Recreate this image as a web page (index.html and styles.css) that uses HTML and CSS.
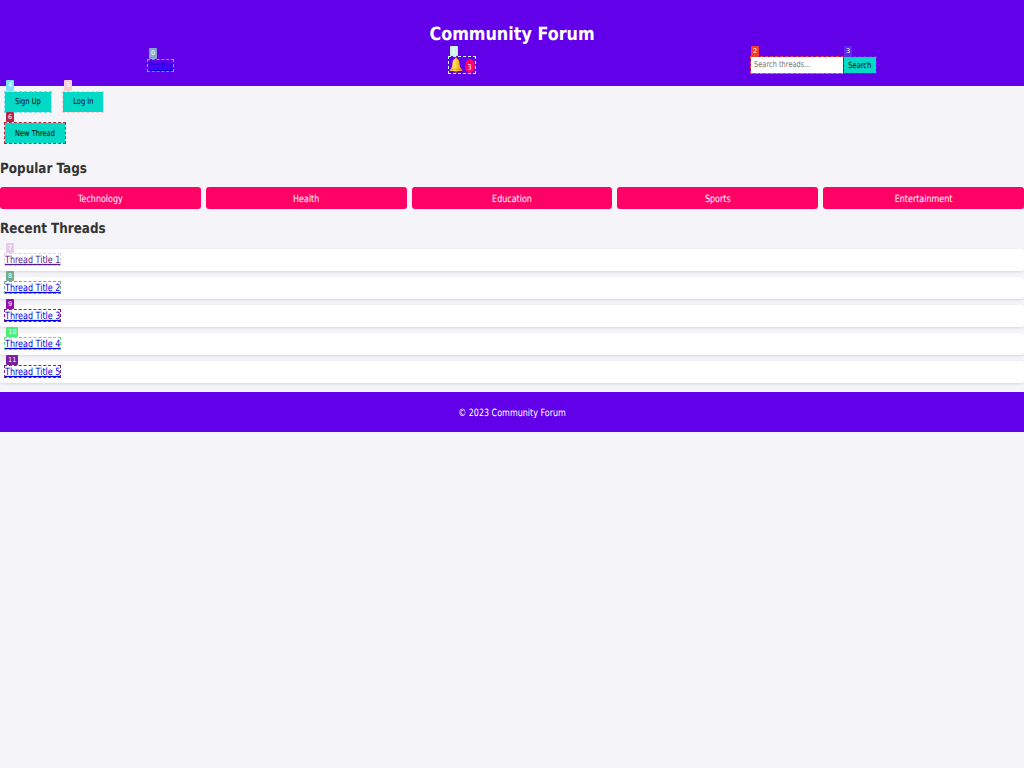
FILE: index.html
```html
<!DOCTYPE html>
<html lang="en">
<head>
<meta charset="utf-8">
<title>Community Forum</title>
<link rel="stylesheet" href="styles.css">
</head>
<body>
<header class="header">
  <h1><span class="t">Community Forum</span></h1>
  <nav class="nav">
    <a class="mark c0 profile" href="#"><span class="t">Profile</span><span class="label">0</span></a>
    <div class="mark c1 bell">
      <svg viewBox="0 0 28 28" width="14" height="16" preserveAspectRatio="none">
        <defs><linearGradient id="gold"><stop offset="0" stop-color="#f9a60c"/><stop offset=".35" stop-color="#ffe36a"/><stop offset=".6" stop-color="#fbc02d"/><stop offset="1" stop-color="#e58a00"/></linearGradient></defs>
        <circle cx="14" cy="3.5" r="2.500" fill="#f3a91b"/>
        <ellipse cx="14" cy="24.5" rx="4" ry="3" fill="#a86410"/>
        <path d="M14 3C8 3 7 8 6.500 14C6 19 4 20 1.500 22.500V24.500H26.500V22.500C24 20 22 19 21.500 14C21 8 20 3 14 3Z" fill="url(#gold)"/>
        <path d="M2 22.500Q14 19.500 26 22.500" fill="none" stroke="#d88908" stroke-width="1.300"/>
      </svg>
      <span class="count"><span class="t">3</span></span><span class="label">1</span>
    </div>
    <form class="search">
      <div class="mark c2 field"><input type="text" placeholder="Search threads..."><span class="label">2</span></div>
      <button type="button" class="mark c3 go"><span class="t">Search</span><span class="label">3</span></button>
    </form>
  </nav>
</header>
<main>
  <div class="actions">
    <button class="mark c4 btn"><span class="t">Sign Up</span><span class="label">4</span></button>
    <button class="mark c5 btn"><span class="t">Log In</span><span class="label">5</span></button>
  </div>
  <div class="actions"><button class="mark c6 btn"><span class="t">New Thread</span><span class="label">6</span></button></div>
  <h2><span class="t">Popular Tags</span></h2>
  <div class="tags">
    <div class="tag"><span class="t">Technology</span></div>
    <div class="tag"><span class="t">Health</span></div>
    <div class="tag"><span class="t">Education</span></div>
    <div class="tag"><span class="t">Sports</span></div>
    <div class="tag"><span class="t">Entertainment</span></div>
  </div>
  <h2><span class="t">Recent Threads</span></h2>
  <ul class="threads">
    <li><a class="mark c7 visited" href="#"><span class="t">Thread Title 1</span><span class="label">7</span></a></li>
    <li><a class="mark c8" href="#"><span class="t">Thread Title 2</span><span class="label">8</span></a></li>
    <li><a class="mark c9" href="#"><span class="t">Thread Title 3</span><span class="label">9</span></a></li>
    <li><a class="mark c10" href="#"><span class="t">Thread Title 4</span><span class="label">10</span></a></li>
    <li><a class="mark c11" href="#"><span class="t">Thread Title 5</span><span class="label">11</span></a></li>
  </ul>
</main>
<footer class="footer"><span class="t">© 2023 Community Forum</span></footer>
</body>
</html>
```
FILE: styles.css
```css
* { box-sizing: border-box; }
html { background: #f4f4f9; }
body {
  margin: 0;
  font: 8px/11px "DejaVu Sans", sans-serif;
  text-rendering: geometricPrecision;
  color: #333;
}
.header { height: 85.5px; padding-top: 23px; background: #6200ea; color: #fff; text-align: center; }
h1 { margin: 0 0 12px; font-size: 16px; line-height: 21px; }
h2 { margin: 11px 0; font-size: 12px; line-height: 16px; }
a { color: #00e; text-decoration: none; }
.visited { color: #551a8b; }

/* Tall, narrow glyphs */
.t { display: inline-block; white-space: nowrap; transform: scaleY(1.25); }
h1 .t { transform: translateY(.5px) scaleY(1.14); }
h2 .t { transform: scaleY(1.18); }
a .t { text-decoration: underline; text-decoration-thickness: .7px; }

.nav { display: flex; align-items: center; height: 18px; }
.profile { margin-left: 148px; width: 25px; line-height: 11px; text-align: left; }
.bell { display: flex; align-items: flex-end; gap: 2px; width: 26px; height: 15.500px; margin-left: 275.500px; }
.bell svg { flex: none; }
.count { width: 10px; height: 14px; flex: none; border-radius: 50%; background: #ff0266; font-size: 6.500px; line-height: 16px; }
.search { display: flex; align-items: center; margin-left: 276.500px; }
.field { width: 91.500px; height: 16px; background: #fff; }
.field input { display: block; width: 100%; height: 12.800px; padding: 0 3px; border: 0; background: #fff; font: 6.667px "DejaVu Sans", sans-serif; text-rendering: geometricPrecision; transform: scaleY(1.25); transform-origin: 0 0; }
.field input::placeholder { color: #757575; }
.go { width: 31.500px; height: 16px; margin-left: 1.500px; }
button { border: 0; padding: 0; background: #03dac6; color: #000; font: 6.667px/9px "DejaVu Sans", sans-serif; text-rendering: geometricPrecision; }
button .t { transform: translateY(.5px) scaleY(1.25); }

.actions { display: flex; gap: 12.500px; padding: 6px 5px 5.500px; }
.btn { height: 20px; padding: 0 10px; }
.tags { display: grid; grid-template-columns: repeat(5, 1fr); gap: 5px; }
.tag { height: 22.500px; padding: 6px; border-radius: 3px; background: #ff0266; color: #fff; text-align: center; }
.threads { list-style: none; margin: 12.500px 0 9px; padding: 0; }
.threads li { display: flex; height: 22px; margin-bottom: 6px; padding: 5.500px 5px; border-radius: 3px; background: #fff; box-shadow: 0 1px 3px rgba(0, 0, 0, .12); }
.threads li:last-child { margin-bottom: 0; }
.footer { height: 40.800px; padding-top: 15px; background: #6200ea; color: #fff; text-align: center; }

/* Numbered element markers */
.mark { position: relative; outline: 1px dashed var(--c); }
.label {
  position: absolute;
  left: 1px;
  top: -11.500px;
  height: 10.500px;
  padding: 0 2px;
  border-radius: 1px;
  background: var(--c);
  color: #fff;
  font: 6.500px/10.500px "DejaVu Sans", sans-serif;
}
.search .label { left: 0; top: -11px; }
.c0 { --c: #83a8d0; }
.c1 { --c: #d0f5ed; }
.c2 { --c: #f43b32; }
.c3 { --c: #6326ee; }
.c4 { --c: #7ae3fb; }
.c5 { --c: #f9cdd0; }
.c6 { --c: #b72642; }
.c7 { --c: #e5cbeb; }
.c8 { --c: #72ad8b; }
.c9 { --c: #910da5; }
.c10 { --c: #4bed7d; }
.c11 { --c: #7b1fa2; }
```
